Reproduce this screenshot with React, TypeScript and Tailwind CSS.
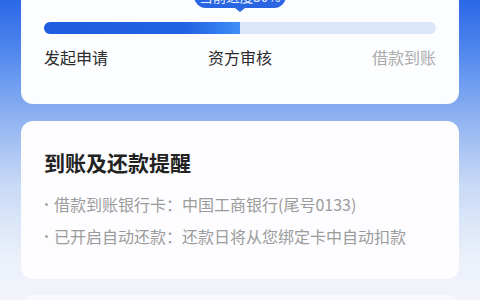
const steps = [
  { label: "发起申请", done: true },
  { label: "资方审核", done: true },
  { label: "借款到账", done: false },
];

const notes = [
  "借款到账银行卡：中国工商银行(尾号0133)",
  "已开启自动还款：还款日将从您绑定卡中自动扣款",
];

export default function App() {
  return (
    <div
      className="h-[300px] w-[480px] overflow-hidden px-[21px] bg-[linear-gradient(180deg,#2b68e6_0%,#5289ee_18%,#8cb0f1_38%,#c9daf6_62%,#eaf0fa_85%,#f2f4fa_100%)]"
      style={{ fontFamily: '"Noto Sans CJK SC", "Noto Sans", sans-serif' }}
    >
      {/* progress card */}
      <div className="-mt-[30px] rounded-[12px] bg-[#fcfdff] px-[23px] pt-[14px] pb-[35px]">
        <div className="flex flex-col items-center">
          <div className="h-[24px] rounded-[12px] bg-[#2a66e2] px-[5px] text-[13.5px] leading-[24px] text-[#e8f0ff]">
            当前进度50%
          </div>
          <div className="h-0 w-0 border-x-[5px] border-t-[4px] border-x-transparent border-t-[#2a66e2]" />
        </div>
        <div className="mt-[10px] h-[12px] rounded-full bg-[#dbe6f9]">
          <div className="h-full w-1/2 rounded-l-full bg-[linear-gradient(90deg,#1e5ddf_0%,#2162e2_72%,#3f8ef7_100%)]" />
        </div>
        <div className="mt-[11px] flex justify-between text-[16px] leading-[24px]">
          {steps.map((s) => (
            <span key={s.label} className={s.done ? "text-[#2b2b2b]" : "text-[#ababab]"}>
              {s.label}
            </span>
          ))}
        </div>
      </div>

      {/* reminder card */}
      <div className="mt-[17px] rounded-[12px] bg-[#fdfdff] px-[23px] pt-[27px] pb-[27px]">
        <h2 className="text-[21px] font-bold leading-[28px] text-[#222]">到账及还款提醒</h2>
        <ul className="mt-[12px]">
          {notes.map((n) => (
            <li key={n} className="flex items-center text-[16px] leading-[32px] text-[#9b9b9b]">
              <span className="ml-[1px] mr-[6px] h-[3px] w-[3px] shrink-0 rounded-full bg-[#a8a8a8]" />
              {n}
            </li>
          ))}
        </ul>
      </div>

      <div className="mt-[16px] h-[40px] rounded-[12px] bg-[#f8f9fd]" />
    </div>
  );
}
